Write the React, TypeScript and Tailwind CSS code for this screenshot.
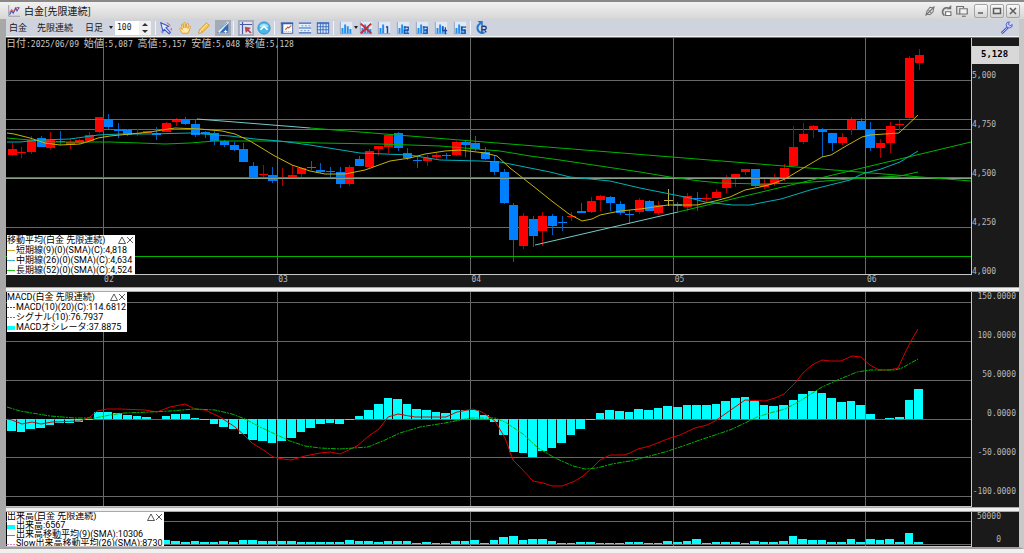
import { ReactNode, useState } from "react";
import { clsx } from "clsx";

// ─── Dados ────────────────────────────────────────────────────────────────────

// coordenadas no espaço do gráfico: x 6..971, y 38..546
const FIRST_X = 11.7;
const STEP = 9.649;
const barX = (i: number) => FIRST_X + i * STEP;

const MONTHS = [
  { label: "02", x: 103 },
  { label: "03", x: 277 },
  { label: "04", x: 470 },
  { label: "05", x: 673 },
  { label: "06", x: 865 },
];

type Candle = [kind: "r" | "b" | "y", top: number, bottom: number, high: number, low: number];

const CANDLES: Candle[] = [
  ["r", 149, 155, 143, 156], ["r", 152, 153, 147, 158], ["r", 140, 152, 136, 154], ["b", 138, 147, 136, 147],
  ["r", 140, 148, 132, 150], ["b", 141, 142, 131, 145], ["r", 142, 145, 139, 149], ["r", 140, 143, 139, 144],
  ["r", 135, 141, 132, 141], ["r", 117, 132, 117, 133], ["b", 119, 127, 114, 129], ["b", 129, 131, 123, 138],
  ["b", 130, 135, 129, 136], ["r", 133, 134, 129, 136], ["r", 131, 133, 131, 133], ["b", 133, 135, 127, 140],
  ["r", 123, 132, 122, 132], ["r", 119, 122, 118, 126], ["b", 119, 124, 117, 125], ["b", 124, 135, 120, 137],
  ["b", 132, 134, 131, 138], ["b", 133, 141, 131, 145], ["b", 141, 145, 140, 147], ["b", 145, 150, 142, 151],
  ["b", 149, 162, 143, 162], ["b", 166, 177, 162, 178], ["r", 174, 175, 165, 177], ["b", 175, 181, 167, 183],
  ["r", 178, 179, 168, 186], ["r", 175, 178, 165, 178], ["r", 168, 174, 167, 178], ["b", 167, 168, 161, 170],
  ["b", 170, 172, 163, 173], ["b", 171, 172, 167, 177], ["b", 172, 184, 167, 188], ["r", 167, 184, 165, 186],
  ["b", 159, 166, 156, 166], ["r", 151, 167, 149, 168], ["r", 146, 149, 146, 156], ["r", 135, 147, 134, 153],
  ["b", 133, 148, 132, 151], ["b", 153, 158, 148, 160], ["b", 160, 161, 156, 168], ["r", 158, 161, 155, 166],
  ["r", 155, 157, 153, 159], ["b", 155, 156, 153, 159], ["r", 142, 155, 141, 156], ["b", 142, 145, 141, 157],
  ["b", 143, 149, 136, 151], ["b", 152, 159, 147, 160], ["b", 161, 172, 156, 175], ["b", 172, 203, 169, 204],
  ["b", 205, 240, 203, 262], ["r", 216, 246, 213, 249], ["b", 219, 236, 216, 247], ["r", 216, 231, 212, 246],
  ["b", 216, 226, 214, 235], ["b", 222, 223, 216, 231], ["r", 216, 217, 212, 221], ["b", 211, 213, 203, 213],
  ["r", 201, 212, 197, 213], ["r", 196, 200, 195, 211], ["b", 197, 203, 196, 211], ["b", 204, 213, 201, 215],
  ["b", 214, 215, 210, 224], ["r", 200, 212, 198, 214], ["b", 201, 211, 200, 211], ["r", 205, 213, 201, 215],
  ["y", 200, 201, 189, 206], ["b", 204, 206, 202, 211], ["r", 196, 207, 193, 211], ["b", 198, 199, 192, 211],
  ["r", 198, 199, 194, 201], ["r", 192, 198, 189, 198], ["r", 178, 188, 175, 193], ["r", 174, 177, 174, 187],
  ["r", 169, 172, 169, 175], ["b", 169, 186, 169, 187], ["r", 184, 187, 178, 189], ["r", 178, 183, 174, 186],
  ["r", 168, 178, 164, 181], ["r", 147, 166, 126, 167], ["r", 134, 142, 123, 144], ["r", 126, 129, 125, 138],
  ["b", 129, 132, 128, 157], ["b", 133, 143, 133, 151], ["r", 137, 143, 133, 145], ["r", 120, 129, 117, 135],
  ["b", 121, 130, 118, 130], ["b", 129, 148, 122, 151], ["r", 143, 148, 139, 158], ["r", 126, 143, 122, 153],
  ["r", 124, 125, 119, 132], ["r", 58, 118, 56, 119], ["r", 55, 63, 49, 70],
];

const CANDLE_BODY = { r: "#ff0000", b: "#0080ff", y: "#c0b040" };
const CANDLE_WICK = { r: "#b00000", b: "#0060c0", y: "#c0b040" };

const MA9 =
  "7,133 14,134 30,138 45,143 60,145 80,144 90,141 98,138 110,136 150,132 175,128 200,129 222,131 235,134 250,141 260,147 273,155 292,165 310,171 325,174 345,174 365,170 390,161 410,158 425,154 445,151 460,150 485,153 497,156 510,168 533,186 553,202 569,214 582,221 592,219 600,215 620,211 640,209 668,205 697,205 715,201 730,197 745,190 760,187 772,184 785,179 800,170 822,157 831,155 846,146 862,137 870,135 899,133 918,115";
const MA26 =
  "7,142 20,142 40,140 70,139 98,135 120,134 150,134 190,133 230,136 255,139 280,141 310,145 335,149 360,153 385,154 410,155 440,160 480,161 500,162 525,167 550,172 570,177 590,179 610,181 640,188 660,192 690,198 705,202 733,205 750,205 760,203 781,199 810,190 850,180 862,174 881,169 900,162 918,151";
const MA52 =
  "7,138 30,140 55,142 110,142 140,143 165,144 190,143 215,141 270,141 320,143 380,144 440,146 500,151 530,156 560,160 600,166 640,172 670,177 700,181 720,183 760,184 800,183 850,179 900,176 918,172";

const MACD =
  "7,419 12,420 22,424 32,422 41,424 52,422 80,421 90,417 97,411 107,409 120,409 145,410 157,412 170,407 185,404 195,409 205,410 220,417 235,427 245,436 252,443 265,451 273,457 283,459 291,460 305,456 320,453 330,452 340,454 357,446 370,435 379,429 388,417 398,414 415,417 446,417 457,412 473,409 482,412 495,421 505,438 513,460 521,468 533,481 543,483 552,486 562,486 575,481 583,476 592,468 600,460 610,455 624,455 630,453 638,449 650,446 670,438 680,435 695,428 707,425 715,421 725,414 735,407 745,400 765,401 775,398 784,394 795,383 803,373 812,365 822,360 830,361 841,361 852,356 861,357 870,365 879,370 890,370 898,368 905,353 911,341 918,329";
const SIGNAL =
  "7,407 20,411 50,416 75,418 95,418 110,415 125,413 150,412 170,411 195,409 215,410 232,414 245,419 260,427 275,434 290,441 305,446 320,448 340,449 368,447 385,440 400,433 420,427 445,423 470,418 495,418 505,422 523,434 538,448 555,458 573,466 585,469 597,468 612,464 630,461 650,456 665,452 680,447 700,440 715,435 730,430 745,423 757,417 770,413 785,409 800,401 822,387 840,379 857,372 870,370 895,370 902,368 918,359";

const OSCILLATOR = [
  -12, -13, -10, -9, -6, -4, -4, -3, -1, 7, 7, 6, 4, 3, 2, 0, 3, 5, 5, 1, -1, -5, -8, -10, -15, -21, -22, -24, -22,
  -19, -13, -9, -5, -4, -5, -1, 3, 9, 15, 21, 20, 15, 10, 9, 7, 6, 9, 9, 9, 4, -3, -16, -33, -34, -38, -32, -29, -24,
  -16, -10, -1, 6, 9, 8, 7, 10, 9, 11, 13, 12, 14, 14, 14, 15, 18, 21, 22, 18, 14, 13, 14, 19, 25, 28, 26, 21, 17,
  18, 14, 5, 0, 1, 2, 19, 30,
];

const VOLUME = [
  3, 3, 3, 3, 3, 3, 3, 3, 3, 3, 3, 3, 3, 3, 3, 2, 4, 3, 2, 3, 2, 2, 3, 2, 4, 4, 3, 3, 3, 3, 2, 2, 2, 2, 2, 4, 3, 3,
  2, 3, 3, 3, 1, 2, 1, 1, 3, 3, 4, 1, 4, 7, 8, 4, 5, 5, 3, 1, 1, 2, 2, 1, 1, 1, 2, 2, 1, 1, 3, 2, 3, 5, 1, 2, 2, 2,
  1, 3, 2, 2, 3, 8, 5, 4, 4, 2, 2, 5, 2, 5, 4, 5, 2, 11, 2,
];

// ─── Texto misto ──────────────────────────────────────────────────────────────

// kanji em 10px, latinos em mono 8px (meia largura)
function HalfWidth({ children }: { children: string }) {
  const parts = children.split(/([\u3000-\u9fff]+)/);
  return (
    <span className="font-['DejaVu_Sans_Mono','Noto_Sans_CJK_JP',monospace] text-[8px] whitespace-pre">
      {parts.map((p, i) =>
        i % 2 ? (
          <span key={i} className="text-[10px]">
            {p}
          </span>
        ) : (
          p
        )
      )}
    </span>
  );
}

// ─── Ícones ───────────────────────────────────────────────────────────────────

function Icon({ children, className }: { children: ReactNode; className?: string }) {
  return (
    <svg viewBox="0 0 16 16" className={clsx(className ?? "size-3.5")} fill="none" aria-hidden="true">
      {children}
    </svg>
  );
}

const AppIcon = () => (
  <Icon className="size-3">
    <path d="M1 0v15h15" stroke="#8a8a90" />
    <path d="M2 13l3-5 2 3 3-7 2 4 3-5" stroke="#3b50c8" strokeWidth="1.4" />
    <path d="M2 10l3-4 3 3 4-6 3 1" stroke="#d0404c" strokeWidth="1.3" />
  </Icon>
);

const PointerIcon = () => (
  <Icon>
    <path d="M2 2l9 4-3 1.500 5 5.500-1.500 1.500L6 9.500 4.500 12z" fill="#e8ecff" stroke="#3c50c0" strokeWidth="1.200" />
    <path d="M9 2l4 3M14 8v3" stroke="#d04858" />
    <path d="M2 12l3 2" stroke="#5a70d0" />
  </Icon>
);

const HandIcon = () => (
  <Icon>
    <path
      d="M5 14L2 9.500c-.6-1.300.8-1.900 1.700-.9L5 10 3.800 4.600c-.2-1.300 1.400-1.500 1.700-.4L6.800 8 6.700 2.600c0-1.300 1.600-1.300 1.800 0L9 7.800l1.200-4.500c.4-1.200 1.900-.8 1.700.4L11.300 8.600l1.400-2.100c.8-1 2-.3 1.500.9L11.500 14z"
      fill="#ffe9a8"
      stroke="#d8982c"
    />
  </Icon>
);

const PencilIcon = () => (
  <Icon>
    <path d="M2 14l1-4L11 2l3 3-8 8z" fill="#ffc848" stroke="#d89020" />
    <path d="M2 14l1-4 3 3z" fill="#fff2d0" stroke="#b08040" strokeWidth=".6" />
    <path d="M4 11l8-8" stroke="#fff0a8" />
  </Icon>
);

const DrawIcon = () => (
  <Icon>
    <path d="M1 13L14 3v10z" fill="#3068b8" />
    <path d="M3 13L14 1" stroke="#e8f2ff" strokeWidth="2" />
    <path d="M5 9l8-7" stroke="#4890e0" />
    <path d="M9 12h4M11 10v4" stroke="#fff" />
  </Icon>
);

const CursorIcon = () => (
  <Icon>
    <path d="M1 1h14v14H1z" fill="#dfe3ee" />
    <path d="M4 1v14M1 4h14" stroke="#4858a8" strokeWidth="1.400" />
    <path d="M7 7l1 6 2-2 3 3 1-1-3-3 2-2z" fill="#c04050" stroke="#8a2838" strokeWidth=".5" />
  </Icon>
);

const UpCircleIcon = () => (
  <Icon>
    <circle cx="8" cy="8" r="7" fill="#48b8e8" stroke="#2890c8" />
    <path d="M3 7a5 4 0 0110 0" fill="#a0e0f8" />
    <path d="M4 10l4-4 4 4" stroke="#fff" strokeWidth="2" />
  </Icon>
);

const WindowIcon = () => (
  <Icon>
    <rect x="1.500" y="2" width="13" height="12" fill="#fff" stroke="#3860a8" />
    <path d="M1 3h14M3 3v11" stroke="#3860a8" strokeWidth="1.500" />
    <path d="M6 10l3-3 1 1 3-3" stroke="#d05838" strokeWidth="1.300" />
    <path d="M5 12h8" stroke="#98a8c8" strokeDasharray="1 1" />
  </Icon>
);

const RowsIcon = () => (
  <Icon>
    <path d="M1 2h14v12H1z" fill="#e4eefc" />
    <path d="M1 2.500h14M1 8h14M1 13.500h14" stroke="#3068b8" strokeWidth="1.400" />
    <path d="M4 5.500h2m2 0h2m2 0h2M3 11h2m2 0h2m2 0h2" stroke="#5888c8" />
  </Icon>
);

const GridIcon = () => (
  <Icon>
    <rect x="1.500" y="2" width="13" height="12" fill="#d8e6fa" stroke="#2858b0" />
    <path d="M1 3h14M1 6.500h14M1 10h14M5 2v12M8 2v12M11.500 2v12" stroke="#3868b8" />
  </Icon>
);

function ChartIcon({ mark }: { mark?: string }) {
  return (
    <Icon>
      <path d="M1 1h14v13H1z" fill="#e2e8f4" />
      <path d="M1.500 1v13.500H15" stroke="#8898b0" />
      <path d="M4 14V8M7 14V4" stroke="#2090f0" strokeWidth="2.200" />
      {mark !== "1" && <path d="M10 14V6M13 14V9" stroke="#2090f0" strokeWidth="2.200" />}
      {mark === "x" && <path d="M2 3l12 11M14 3L2 14" stroke="#d02830" strokeWidth="2.200" />}
      {mark === "1" && <path d="M12 6v8M10.500 7.500L12 6" stroke="#1848a0" strokeWidth="1.600" />}
      {mark === "2" && <path d="M9 7h5v3.500H9.500V14H15" stroke="#1848a0" strokeWidth="1.400" />}
      {mark === "3" && <path d="M9 7h5v7H9M10 10.500h4" stroke="#1848a0" strokeWidth="1.400" />}
      {mark === "4" && <path d="M10 6v5h5M13 7v8" stroke="#1848a0" strokeWidth="1.400" />}
      {mark === "5" && <path d="M15 7h-5v3.500h4V14H9" stroke="#1848a0" strokeWidth="1.400" />}
    </Icon>
  );
}

const ReloadIcon = () => (
  <Icon>
    <path d="M7 3a5.500 5.500 0 105 10" stroke="#2078d0" strokeWidth="2.400" />
    <path d="M4 0h6v6z" fill="#2078d0" />
    <path d="M9 13V6h3a2 2 0 010 4H9m3 0l2 3" stroke="#183c90" strokeWidth="1.500" />
  </Icon>
);

const WrenchIcon = () => (
  <Icon>
    <path d="M2 14l7-7" stroke="#4858d0" strokeWidth="3" />
    <path d="M2.500 13.500l7-7" stroke="#c8d0ff" />
    <path d="M14 4a3.500 3.500 0 11-3-3L9.500 3.500l2 2z" fill="#c0ccff" stroke="#4858d0" />
  </Icon>
);

const LinkIcon = () => (
  <Icon className="size-3">
    <path d="M2 14L14 2" stroke="#707070" strokeWidth="1.500" />
    <path d="M4 8l4-5 5 1-1 5-4 4-5-1z" stroke="#777" strokeWidth="1.400" />
    <path d="M6 7l4 4" stroke="#777" strokeWidth="1.400" />
  </Icon>
);

const RotateIcon = () => (
  <Icon className="size-3">
    <path d="M12 4.500A5.500 5.500 0 106 14" stroke="#707070" strokeWidth="2.200" />
    <path d="M9 5.500h6V0z" fill="#707070" />
    <path d="M7.500 9h7v5h-7z" fill="#fff" stroke="#707070" strokeWidth="1.500" />
  </Icon>
);

const DetachIcon = () => (
  <Icon className="size-3">
    <path d="M5 12H1V2h9v2" stroke="#707070" strokeWidth="1.600" />
    <path d="M5 5h10v7H5z" fill="#f0f0f0" stroke="#707070" strokeWidth="1.600" />
    <path d="M8 15h5" stroke="#707070" strokeWidth="1.600" />
  </Icon>
);

// ─── Janela ───────────────────────────────────────────────────────────────────

function WindowButton({ label, children }: { label: string; children: ReactNode }) {
  return (
    <button
      aria-label={label}
      className="flex size-3.5 items-center justify-center rounded-xs border border-[#a4a4a4] bg-linear-to-b from-[#fafafa] to-[#d4d4d4]"
    >
      <svg viewBox="0 0 10 10" className="size-2.5" fill="none" stroke="#5c5c5c" strokeWidth="1.5">
        {children}
      </svg>
    </button>
  );
}

function TitleBar() {
  return (
    <header className="flex h-[19px] items-center border-t-2 border-[#8c8888] bg-linear-to-b from-[#f2f2f2] to-[#d6d6d6] pr-1 pl-2">
      <AppIcon />
      <h1 className="ml-1 flex-1 text-[10px] leading-4 text-[#101010]">白金[先限連続]</h1>
      <div className="mr-1.5 flex gap-1">
        <button aria-label="リンク"><LinkIcon /></button>
        <button aria-label="更新"><RotateIcon /></button>
        <button aria-label="切り離し"><DetachIcon /></button>
      </div>
      <div className="flex gap-0.5">
        <WindowButton label="最小化"><path d="M2 7h5" /></WindowButton>
        <WindowButton label="最大化"><path d="M1.500 2.500h7v5h-7z" /></WindowButton>
        <WindowButton label="閉じる"><path d="M2 2l6 6M8 2L2 8" /></WindowButton>
      </div>
    </header>
  );
}

function ToolButton({ label, active, children }: { label: string; active?: boolean; children: ReactNode }) {
  return (
    <button
      aria-label={label}
      className={clsx("flex size-4 items-center justify-center", active && "bg-[#a4abb8]")}
    >
      {children}
    </button>
  );
}

const Caret = () => (
  <svg viewBox="0 0 4 3" className="h-[3px] w-1" aria-hidden="true">
    <path d="M0 0h4L2 3z" fill="#202020" />
  </svg>
);

const Separator = () => <span className="h-3.5 w-px bg-[#f2f4f8]" />;

function Toolbar() {
  const [bars, setBars] = useState(100);

  return (
    <div className="flex h-[18px] items-center border-b border-[#f4f4f4] bg-[#cfd3dd] pr-1 pl-[3px] text-[9px] text-[#181818]">
      <button>白金</button>
      <button className="ml-2.5">先限連続</button>
      <label className="ml-3 flex items-center gap-1">
        <select aria-label="足種" className="w-5 appearance-none">
          <option>日足</option>
        </select>
        <Caret />
      </label>
      <input
        aria-label="表示本数"
        value={bars}
        onChange={(e) => setBars(Number(e.target.value) || 0)}
        className="ml-0.5 h-3.5 w-6 bg-white pl-0.5 font-['DejaVu_Sans_Mono',monospace] text-[8px]"
      />
      <div className="flex h-3.5 w-3 flex-col bg-[#f0f0f0]">
        <button aria-label="増やす" className="flex flex-1 items-center justify-center" onClick={() => setBars(bars + 1)}>
          <svg viewBox="0 0 6 3" className="h-[3px] w-1.5"><path d="M0 3h6L3 0z" fill="#303030" /></svg>
        </button>
        <button aria-label="減らす" className="flex flex-1 items-center justify-center" onClick={() => setBars(bars - 1)}>
          <svg viewBox="0 0 6 3" className="h-[3px] w-1.5"><path d="M0 0h6L3 3z" fill="#303030" /></svg>
        </button>
      </div>

      <div className="ml-1 flex flex-1 items-center gap-0.5">
        <Separator />
        <div className="flex gap-[3px]">
          <ToolButton label="選択"><PointerIcon /></ToolButton>
          <ToolButton label="移動"><HandIcon /></ToolButton>
          <ToolButton label="鉛筆"><PencilIcon /></ToolButton>
          <ToolButton label="描画" active><DrawIcon /></ToolButton>
        </div>
        <Separator />
        <div className="ml-0.5 flex gap-0.5">
          <ToolButton label="カーソル" active><CursorIcon /></ToolButton>
          <ToolButton label="上へ"><UpCircleIcon /></ToolButton>
        </div>
        <Separator />
        <div className="ml-0.5 flex gap-0.5">
          <ToolButton label="価格表示"><WindowIcon /></ToolButton>
          <ToolButton label="横線"><RowsIcon /></ToolButton>
          <ToolButton label="格子"><GridIcon /></ToolButton>
        </div>
        <Separator />
        <div className="ml-0.5 flex items-center">
          <ToolButton label="指標"><ChartIcon /></ToolButton>
          <Caret />
          <ToolButton label="指標を消す"><ChartIcon mark="x" /></ToolButton>
        </div>
        <div className="flex gap-[3px]">
          {["1", "2", "3", "4", "5"].map((n) => (
            <ToolButton key={n} label={`指標${n}`}><ChartIcon mark={n} /></ToolButton>
          ))}
        </div>
        <Separator />
        <ToolButton label="再描画"><ReloadIcon /></ToolButton>
      </div>
      <ToolButton label="設定"><WrenchIcon /></ToolButton>
    </div>
  );
}

// ─── Painéis ──────────────────────────────────────────────────────────────────

interface LegendRow {
  text: string;
  color: string;
  kind: "line" | "dash" | "box";
}

function Legend({ title, rows, className }: { title: string; rows: LegendRow[]; className?: string }) {
  return (
    <div
      className={clsx(
        "absolute left-px w-max bg-white pr-px font-['Roboto','Noto_Sans_CJK_JP',sans-serif] text-[9px] whitespace-nowrap text-black",
        className
      )}
    >
      <div className="flex items-center">
        <span className="flex-1">{title}</span>
        <button aria-label="折りたたむ">
          <svg viewBox="0 0 8 8" className="size-2" fill="none" stroke="#303030" strokeWidth=".8"><path d="M.5 7.500h7L4 1z" /></svg>
        </button>
        <button aria-label="消す">
          <svg viewBox="0 0 8 8" className="size-2" fill="none" stroke="#303030" strokeWidth=".8"><path d="M1 1l6 6M7 1L1 7" /></svg>
        </button>
      </div>
      {rows.map((r) => (
        <div key={r.text} className="flex items-center gap-px">
          <svg viewBox="0 0 8 6" className="h-1.5 w-2 shrink-0">
            {r.kind === "box" ? (
              <path d="M0 2h8v4H0z" fill={r.color} />
            ) : (
              <path d="M0 3.500h8" stroke={r.color} strokeDasharray={r.kind === "dash" ? "2 1" : undefined} />
            )}
          </svg>
          <span>{r.text}</span>
        </div>
      ))}
    </div>
  );
}

function Plot({ top, height, grid, children }: { top: number; height: number; grid: number[]; children: ReactNode }) {
  return (
    <svg
      viewBox={`6 ${top} 965 ${height}`}
      preserveAspectRatio="none"
      className="block size-full"
      fill="none"
      aria-hidden="true"
    >
      <g stroke="#686868" shapeRendering="crispEdges">
        {grid.map((y) => (
          <path key={y} d={`M6 ${y + 0.5}H971`} />
        ))}
        {MONTHS.map((m) => (
          <path key={m.label} d={`M${m.x + 0.5} ${top}v${height}`} />
        ))}
      </g>
      {children}
    </svg>
  );
}

function Bars({ values, base }: { values: number[]; base: number }) {
  return (
    <g fill="#00ffff" shapeRendering="crispEdges">
      {values.map((v, i) => {
        if (v === 0) return null;
        const x = Math.round(barX(i) - 4.5);
        const next = Math.round(barX(i + 1) - 4.5);
        return <rect key={i} x={x} y={v > 0 ? base - v : base} width={next - x - 1} height={Math.abs(v)} />;
      })}
    </g>
  );
}

function Axis({ labels, className }: { labels: string[]; className?: string }) {
  return (
    <ul
      className={clsx(
        "flex flex-1 flex-col justify-between font-['DejaVu_Sans_Mono',monospace] text-[8px] leading-[10px] text-[#b8b8b8]",
        className
      )}
    >
      {labels.map((l) => (
        <li key={l}>{l}</li>
      ))}
    </ul>
  );
}

function PricePanel() {
  return (
    <section className="flex">
      <div className="min-w-0 flex-1">
        <div className="relative h-[237px] border-r border-b border-[#c8c8c8] bg-black">
          <Plot top={38} height={236} grid={[80, 129, 178, 227]}>
            <g shapeRendering="crispEdges">
              {CANDLES.map(([kind, top, bottom, high, low], i) => {
                const x = Math.round(barX(i));
                return (
                  <g key={i}>
                    <path d={`M${x + 0.5} ${high}V${low}`} stroke={CANDLE_WICK[kind]} />
                    <rect x={x - 4} y={top} width="9" height={bottom - top} fill={CANDLE_BODY[kind]} />
                  </g>
                );
              })}
            </g>
            <path d="M6 119.500H971M6 177.500H971M6 256.500H971" stroke="#00b400" shapeRendering="crispEdges" />
            <path d="M6 178.500H971" stroke="#88a088" shapeRendering="crispEdges" />
            <path d="M310 128L971 181M678 212L971 142" stroke="#00b400" />
            <path d="M197 119L310 128M535 245L678 212" stroke="#78c8c8" />
            <polyline points={MA52} stroke="#00b400" />
            <polyline points={MA26} stroke="#00b0b8" />
            <polyline points={MA9} stroke="#c8b400" />
          </Plot>
          <p className="absolute top-0 left-0 text-[8px] leading-3 text-[#c8c8c8]">
            <HalfWidth>日付:2025/06/09 始値:5,087 高値:5,157 安値:5,048 終値:5,128</HalfWidth>
          </p>
          <Legend
            title="移動平均(白金 先限連続)"
            className="-bottom-px min-w-32 leading-[10px]"
            rows={[
              { text: "短期線(9)(0)(SMA)(C):4,818", color: "#d0a820", kind: "line" },
              { text: "中期線(26)(0)(SMA)(C):4,634", color: "#40b0e0", kind: "line" },
              { text: "長期線(52)(0)(SMA)(C):4,524", color: "#20c820", kind: "line" },
            ]}
          />
        </div>
        <div className="relative h-3 bg-[#1a1a1a] font-['DejaVu_Sans_Mono',monospace] text-[8px] leading-[10px] text-[#b8b8b8]">
          {MONTHS.map((m) => (
            <span key={m.label} className="absolute pl-px" style={{ left: `${((m.x - 6) / 965) * 100}%` }}>
              {m.label}
            </span>
          ))}
        </div>
      </div>
      <div className="flex w-[47px] flex-col bg-[#1a1a1a] pt-2">
        <strong className="block h-[18px] bg-[#d8d8d8] pl-[9px] font-['DejaVu_Sans_Mono',monospace] text-[9px] leading-4 text-black">
          5,128
        </strong>
        <Axis labels={["5,000", "4,750", "4,500", "4,250", "4,000"]} className="pt-[7px] pb-2.5" />
      </div>
    </section>
  );
}

function MacdPanel() {
  return (
    <section className="flex min-h-[215px] flex-1">
      <div className="relative min-w-0 flex-1 border-r border-b border-[#c8c8c8] bg-black">
        <div className="absolute inset-0">
          <Plot top={292} height={214} grid={[302, 341, 380, 419, 457, 496]}>
            <Bars values={OSCILLATOR} base={419} />
            <polyline points={MACD} stroke="#d80000" />
            <polyline points={SIGNAL} stroke="#00b400" strokeDasharray="5 1 2 1" />
          </Plot>
        </div>
        <Legend
          title="MACD(白金 先限連続)"
          className="top-0 min-w-[116px] leading-[10px]"
          rows={[
            { text: "MACD(10)(20)(C):114.6812", color: "#c02020", kind: "dash" },
            { text: "シグナル(10):76.7937", color: "#20b820", kind: "dash" },
            { text: "MACDオシレータ:37.8875", color: "#00ffff", kind: "box" },
          ]}
        />
      </div>
      <div className="flex w-[47px] bg-[#1a1a1a]">
        <Axis
          labels={["150.0000", "100.0000", "50.0000", "0.0000", "-50.0000", "-100.0000"]}
          className="pr-[3px] pb-2.5 text-right"
        />
      </div>
    </section>
  );
}

function VolumePanel() {
  return (
    <section className="flex h-[35px]">
      <div className="relative min-w-0 flex-1 overflow-hidden border-r border-b border-[#c8c8c8] bg-black">
        <Plot top={512} height={34} grid={[521, 544]}>
          <Bars values={VOLUME} base={544} />
        </Plot>
        <Legend
          title="出来高(白金 先限連続)"
          className="top-0 min-w-[151px] leading-[9px]"
          rows={[
            { text: "出来高:6567", color: "#00ffff", kind: "box" },
            { text: "出来高移動平均(9)(SMA):10306", color: "#20c820", kind: "line" },
            { text: "Slow出来高移動平均(26)(SMA):8730", color: "#e080d0", kind: "dash" },
          ]}
        />
      </div>
      <div className="flex w-[47px] bg-[#1a1a1a]">
        <Axis labels={["50000", "0"]} className="pr-[18px] pb-0.5 text-right" />
      </div>
    </section>
  );
}

const Splitter = () => <div className="h-[5px] border-y border-[#a8a8a8] bg-[#f0f0f0]" />;

export default function App() {
  return (
    <main className="flex min-h-screen flex-col bg-[#bcbcbc] font-['Noto_Sans_CJK_JP',sans-serif]">
      <TitleBar />
      <div className="flex flex-1 flex-col border-r-[5px] border-b-2 border-l-[6px] border-r-[#c8c8c8] border-b-[#a0a0a0] border-l-[#a8a8a8]">
        <Toolbar />
        <div className="flex flex-1 flex-col border-t border-[#707070]">
          <PricePanel />
          <Splitter />
          <MacdPanel />
          <Splitter />
          <VolumePanel />
        </div>
      </div>
      <div className="h-1 bg-[#f0f0f0]" />
    </main>
  );
}
